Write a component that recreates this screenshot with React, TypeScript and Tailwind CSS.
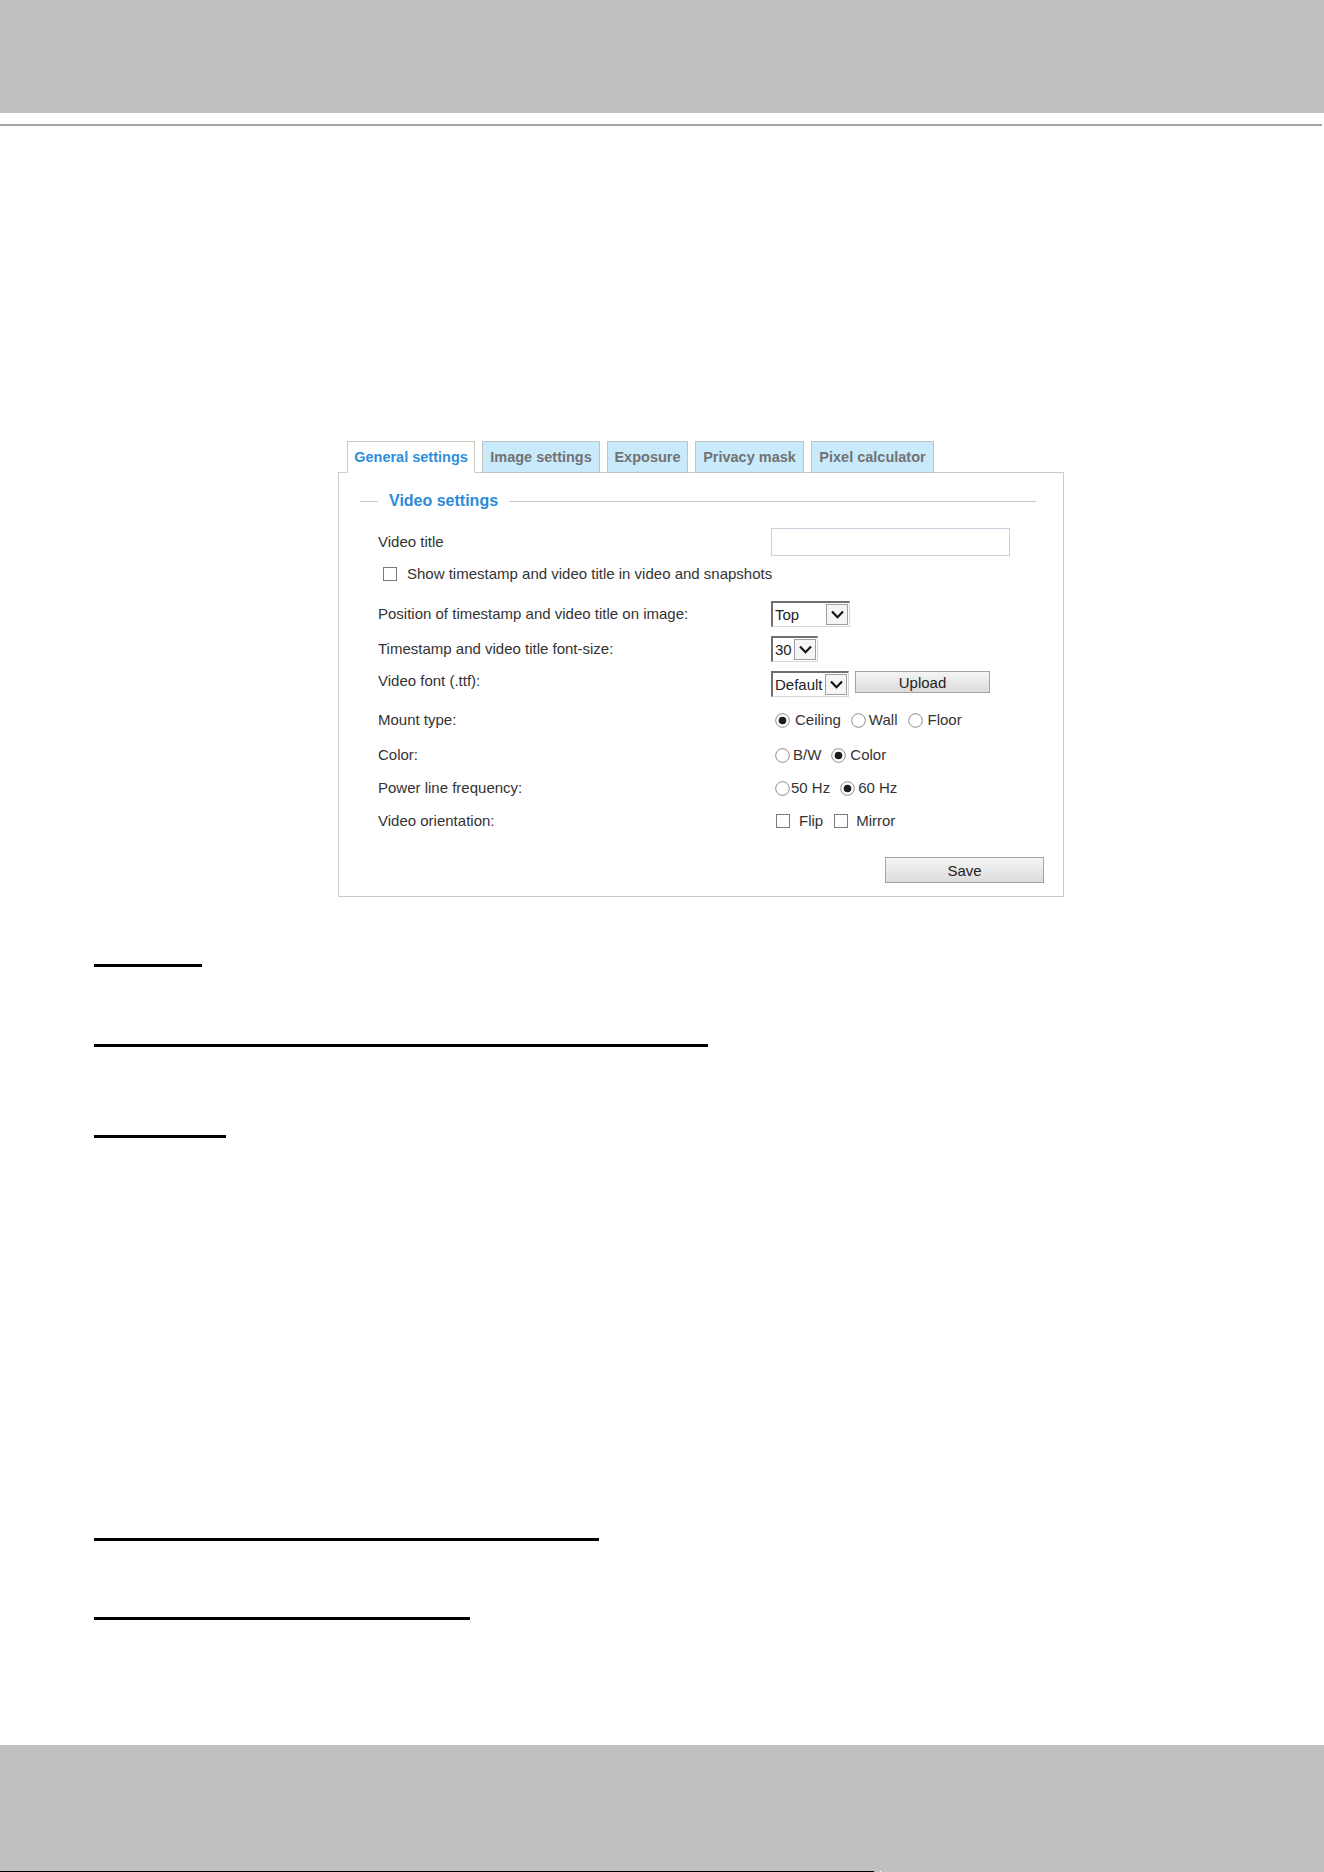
import React from "react";

const TABS = [
  { label: "General settings", w: "w-[128px]", active: true },
  { label: "Image settings", w: "w-[118px]", active: false },
  { label: "Exposure", w: "w-[81px]", active: false },
  { label: "Privacy mask", w: "w-[109px]", active: false },
  { label: "Pixel calculator", w: "w-[123px]", active: false },
];

function Chevron() {
  return (
    <svg width="13" height="9" viewBox="0 0 13 9" className="block">
      <polyline points="1,1.5 6.5,7.2 12,1.5" fill="none" stroke="#111" strokeWidth="2.1" />
    </svg>
  );
}

function Select({ value, w }: { value: string; w: string }) {
  return (
    <div
      className={`${w} h-[26px] flex items-stretch bg-white border-t-2 border-l-2 border-[#6f6f6f] border-r border-b border-r-[#d6d6d6] border-b-[#d6d6d6]`}
    >
      <div className="flex-1 flex items-center pl-[2px] text-[15px] text-[#222] leading-none overflow-hidden whitespace-nowrap">
        {value}
      </div>
      <div className="w-[22px] my-[1px] mr-[1px] flex items-center justify-center border border-[#a0a0a0] bg-[#f5f5f5]">
        <Chevron />
      </div>
    </div>
  );
}

function Radio({ checked, className = "" }: { checked?: boolean; className?: string }) {
  return (
    <svg width="15" height="15" viewBox="0 0 15 15" className={`block shrink-0 ${className}`}>
      <circle cx="7.5" cy="7.5" r="6.8" fill="#fff" stroke="#8c8c8c" strokeWidth="1" />
      {checked && <circle cx="7.5" cy="7.5" r="3.8" fill="#1c1c1c" />}
    </svg>
  );
}

function Check({ className = "" }: { className?: string }) {
  return <div className={`w-[14px] h-[14px] shrink-0 border border-[#7a7a7a] bg-white ${className}`} />;
}

function Button({ label, w, h }: { label: string; w: string; h: string }) {
  return (
    <div
      className={`${w} ${h} flex items-center justify-center border border-[#a3a3a3] bg-gradient-to-b from-[#f5f5f5] to-[#dcdcdc] text-[15px] text-[#222] leading-none`}
    >
      {label}
    </div>
  );
}

function Row({
  label,
  mt,
  children,
  align = "items-center",
  h = "",
}: {
  label: string;
  mt: string;
  children: React.ReactNode;
  align?: string;
  h?: string;
}) {
  return (
    <div className={`flex ${align} ${mt} ${h}`}>
      <div className="w-[432px] pl-[39px] shrink-0 text-[15px] text-[#333] leading-[20px] whitespace-nowrap">{label}</div>
      <div className="flex items-center">{children}</div>
    </div>
  );
}

function Opt({ children, className = "" }: { children: React.ReactNode; className?: string }) {
  return <div className={`text-[15px] text-[#333] leading-[20px] whitespace-nowrap ${className}`}>{children}</div>;
}

export default function App() {
  return (
    <div className="w-[1324px] h-[1872px] bg-white flex flex-col font-['Liberation_Sans',Arial,sans-serif] overflow-hidden">
      {/* page header band */}
      <div className="h-[113px] shrink-0 bg-[#bfc1c0]" />
      <div className="mt-[11px] h-[2px] w-[1322px] bg-[#a2a2a2]" />

      {/* settings window */}
      <div className="mt-[315px] ml-[338px] w-[726px]">
        <div className="flex gap-[7px] pl-[9px] h-[32px] -mb-px relative z-10">
          {TABS.map((t) => (
            <div
              key={t.label}
              className={`${t.w} h-[32px] flex items-center justify-center text-[14.5px] font-bold leading-none whitespace-nowrap border ${
                t.active
                  ? "bg-white text-[#2d8fdc] border-[#cdc9bf] border-b-white"
                  : "bg-[#c9eafb] text-[#727272] border-[#bfc3c2]"
              }`}
            >
              {t.label}
            </div>
          ))}
        </div>

        <div className="border border-[#cfcbc2] bg-white pb-[13px]">
          {/* fieldset legend */}
          <div className="flex items-center mt-[18px] ml-[21px] mr-[27px] h-[20px]">
            <div className="w-[18px] h-px bg-[#cbc7bd]" />
            <div className="px-[11px] text-[16px] font-bold text-[#2d8ad7] leading-none whitespace-nowrap">Video settings</div>
            <div className="flex-1 h-px bg-[#cbc7bd]" />
          </div>

          <Row label="Video title" mt="mt-[17px]">
            <div className="w-[239px] h-[28px] border border-[#c7d0dc] bg-white" />
          </Row>

          <div className="flex items-center mt-[8px] h-[20px] pl-[44px] gap-[10px]">
            <Check />
            <Opt>Show timestamp and video title in video and snapshots</Opt>
          </div>

          <Row label="Position of timestamp and video title on image:" mt="mt-[17px]">
            <Select value="Top" w="w-[79px]" />
          </Row>

          <Row label="Timestamp and video title font-size:" mt="mt-[9px]">
            <Select value="30" w="w-[47px]" />
          </Row>

          <Row label="Video font (.ttf):" mt="mt-[9px]" align="items-start">
            <div className="flex items-start gap-[6px]">
              <Select value="Default" w="w-[78px]" />
              <Button label="Upload" w="w-[135px]" h="h-[22px]" />
            </div>
          </Row>

          <Row label="Mount type:" mt="mt-[13px]" h="h-[20px]">
            <div className="flex items-center pl-[4px]">
              <Radio checked />
              <Opt className="ml-[5px]">Ceiling</Opt>
              <Radio className="ml-[10px]" />
              <Opt className="ml-[3px]">Wall</Opt>
              <Radio className="ml-[11px]" />
              <Opt className="ml-[4px]">Floor</Opt>
            </div>
          </Row>

          <Row label="Color:" mt="mt-[15px]" h="h-[20px]">
            <div className="flex items-center pl-[4px]">
              <Radio />
              <Opt className="ml-[3px]">B/W</Opt>
              <Radio className="ml-[10px]" checked />
              <Opt className="ml-[4px]">Color</Opt>
            </div>
          </Row>

          <Row label="Power line frequency:" mt="mt-[13px]" h="h-[20px]">
            <div className="flex items-center pl-[4px]">
              <Radio />
              <Opt className="ml-[1px]">50 Hz</Opt>
              <Radio className="ml-[10px]" checked />
              <Opt className="ml-[3px]">60 Hz</Opt>
            </div>
          </Row>

          <Row label="Video orientation:" mt="mt-[13px]" h="h-[20px]">
            <div className="flex items-center pl-[5px]">
              <Check />
              <Opt className="ml-[9px]">Flip</Opt>
              <Check className="ml-[11px]" />
              <Opt className="ml-[8px]">Mirror</Opt>
            </div>
          </Row>

          <div className="flex justify-end mt-[26px] mr-[19px]">
            <Button label="Save" w="w-[159px]" h="h-[26px]" />
          </div>
        </div>
      </div>

      {/* underlined headings */}
      <div className="ml-[94px] flex flex-col items-start">
        <div className="mt-[67px] w-[108px] h-[3px] bg-black" />
        <div className="mt-[77px] w-[614px] h-[3px] bg-black" />
        <div className="mt-[88px] w-[132px] h-[3px] bg-black" />
        <div className="mt-[400px] w-[505px] h-[3px] bg-black" />
        <div className="mt-[76px] w-[376px] h-[3px] bg-black" />
      </div>

      {/* page footer band */}
      <div className="mt-auto h-[127px] shrink-0 bg-[#bfc1c0] flex items-end">
        <div className="w-[874px] h-px bg-black" />
        <div className="ml-[6px] w-px h-px bg-white" />
      </div>
    </div>
  );
}
